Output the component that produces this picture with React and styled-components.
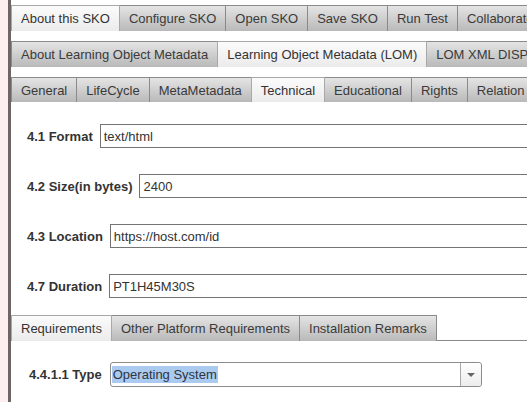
import React from "react";
import styled, { createGlobalStyle } from "styled-components";

const Global = createGlobalStyle`
  html, body { margin: 0; padding: 0; background: #fff; }
  body { font-family: "Liberation Sans", Arial, sans-serif; font-size: 13px; color: #333; }
`;

const Page = styled.div`
  display: flex;
  width: 527px;
  height: 402px;
  overflow: hidden;
`;

const Strip = styled.div`
  width: 8px;
  flex: none;
  background: #fdeff0;
`;

const Main = styled.div`
  flex: 1;
  min-width: 0;
  border-left: 3px solid #6d6666;
  padding-top: 5px;
  display: flex;
  flex-direction: column;
  overflow: hidden;
`;

const TabBar = styled.div`
  display: flex;
  flex: none;
  border-bottom: 1px solid #8a8a8a;
  margin-top: ${(p) => p.$top || 0}px;
  white-space: nowrap;
`;

const Tab = styled.div`
  flex: none;
  height: ${(p) => p.$h || 25}px;
  padding: 0 9px;
  display: flex;
  align-items: center;
  font-size: 13px;
  color: ${(p) => (p.$active ? "#333" : "#3a3a3a")};
  border: 1px solid ${(p) => (p.$active ? "#a8a8a8" : "#8a8a8a")};
  border-bottom: none;
  margin-left: -1px;
  margin-bottom: -1px;
  position: relative;
  z-index: ${(p) => (p.$active ? 2 : 1)};
  background: ${(p) =>
    p.$active
      ? "linear-gradient(#fbfbfb, #ebebeb)"
      : "linear-gradient(#e4e4e4, #b9b9b9)"};
  box-sizing: content-box;
  &:first-child { margin-left: 0; }
`;

const Fields = styled.div`
  display: flex;
  flex-direction: column;
  gap: 26px;
  padding: 22px 0 0 16px;
`;

const FieldRow = styled.div`
  display: flex;
  align-items: center;
  height: 24px;
  gap: 7px;
  white-space: nowrap;
`;

const Label = styled.span`
  font-weight: bold;
  font-size: 13px;
  color: #333;
  flex: none;
`;

const Input = styled.div`
  flex: none;
  width: 500px;
  height: 22px;
  border: 1px solid #747474;
  display: flex;
  align-items: center;
  padding-left: 3px;
  font-size: 13px;
  color: #333;
  background: #fff;
`;

const SelectRow = styled.div`
  display: flex;
  align-items: center;
  gap: 8px;
  padding: 21px 0 0 18px;
`;

const Select = styled.div`
  width: 370px;
  height: 23px;
  border: 1px solid #8c8c8c;
  border-radius: 3px;
  display: flex;
  align-items: stretch;
  background: #fff;
`;

const SelectValue = styled.div`
  flex: 1;
  display: flex;
  align-items: center;
  padding-left: 1px;
`;

const Highlight = styled.span`
  background: #aacaf0;
  color: #2e3440;
  padding: 1px 1px;
  font-size: 13px;
`;

const DropButton = styled.div`
  width: 20px;
  border-left: 1px solid #a8a8a8;
  display: flex;
  align-items: center;
  justify-content: center;
  background: linear-gradient(#ffffff, #ececec);
  border-radius: 0 3px 3px 0;
`;

const Arrow = styled.div`
  width: 0;
  height: 0;
  border-left: 4px solid transparent;
  border-right: 4px solid transparent;
  border-top: 4px solid #666;
`;

const row1 = ["About this SKO", "Configure SKO", "Open SKO", "Save SKO", "Run Test", "Collaborate"];
const row2 = ["About Learning Object Metadata", "Learning Object Metadata (LOM)", "LOM XML DISPLAY"];
const row3 = ["General", "LifeCycle", "MetaMetadata", "Technical", "Educational", "Rights", "Relation", "Annotation"];
const reqTabs = ["Requirements", "Other Platform Requirements", "Installation Remarks"];

const fields = [
  ["4.1 Format", "text/html"],
  ["4.2 Size(in bytes)", "2400"],
  ["4.3 Location", "https://host.com/id"],
  ["4.7 Duration", "PT1H45M30S"],
];

export default function App() {
  return (
    <>
      <Global />
      <Page>
        <Strip />
        <Main>
          <TabBar>
            {row1.map((t, i) => (
              <Tab key={t} $active={i === 0}>{t}</Tab>
            ))}
          </TabBar>
          <TabBar $top={10}>
            {row2.map((t, i) => (
              <Tab key={t} $active={i === 1}>{t}</Tab>
            ))}
          </TabBar>
          <TabBar $top={10}>
            {row3.map((t, i) => (
              <Tab key={t} $h={24} $active={i === 3}>{t}</Tab>
            ))}
          </TabBar>
          <Fields>
            {fields.map(([l, v]) => (
              <FieldRow key={l}>
                <Label>{l}</Label>
                <Input>{v}</Input>
              </FieldRow>
            ))}
          </Fields>
          <TabBar $top={17}>
            {reqTabs.map((t, i) => (
              <Tab key={t} $active={i === 0}>{t}</Tab>
            ))}
          </TabBar>
          <SelectRow>
            <Label>4.4.1.1 Type</Label>
            <Select>
              <SelectValue>
                <Highlight>Operating System</Highlight>
              </SelectValue>
              <DropButton>
                <Arrow />
              </DropButton>
            </Select>
          </SelectRow>
        </Main>
      </Page>
    </>
  );
}
